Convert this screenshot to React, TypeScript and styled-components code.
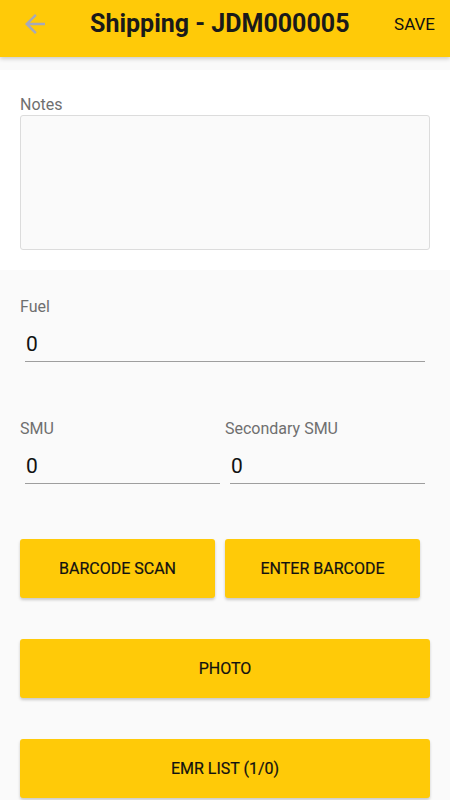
import styled, { createGlobalStyle } from "styled-components";

const GlobalStyle = createGlobalStyle`
    html, body {
        margin: 0;
        padding: 0;
        background: #fafafa;
        font-family: Roboto, "Liberation Sans", sans-serif;
    }
`;

const Page = styled.div`
    width: 450px;
    height: 800px;
    overflow: hidden;
    background: #fafafa;
`;

const Header = styled.header`
    box-sizing: border-box;
    height: 57px;
    padding-bottom: 10px;
    display: flex;
    align-items: center;
    background: #ffca08;
    box-shadow: 0 2px 4px rgba(0, 0, 0, 0.18);
    position: relative;
    z-index: 1;
`;

const BackButton = styled.button`
    width: 70px;
    height: 40px;
    padding: 0 0 0 20px;
    border: none;
    background: none;
    display: flex;
    align-items: center;
`;

const Title = styled.h1`
    flex: 1;
    margin: 0 0 0 20px;
    font-size: 25px;
    font-weight: bold;
    color: #1a1a1a;
`;

const SaveButton = styled.button`
    margin: 0 15px 0 0;
    padding: 0;
    border: none;
    background: none;
    font-family: Roboto, "Liberation Sans", sans-serif;
    font-size: 17px;
    color: #111;
`;

const NotesSection = styled.section`
    margin-top: 13px;
    padding: 26px 20px 20px;
    background: #fff;
`;

const Label = styled.div`
    font-size: 16px;
    color: #6f6f6f;
    line-height: 18px;
`;

const NotesBox = styled.textarea`
    display: block;
    box-sizing: border-box;
    width: 100%;
    height: 135px;
    margin-top: 1px;
    border: 1px solid #dcdcdc;
    border-radius: 3px;
    background: #fafafa;
    resize: none;
`;

const Form = styled.div`
    padding: 28px 20px 0;
`;

const Row = styled.div<{ $gap: number }>`
    display: flex;
    margin-bottom: ${(p) => p.$gap}px;
`;

const Field = styled.div`
    flex: 1;
`;

const ValueInput = styled.input`
    display: block;
    box-sizing: border-box;
    width: calc(100% - 10px);
    margin: 14px 5px 0;
    padding: 0 0 3px 1px;
    border: none;
    border-bottom: 1px solid #9e9e9e;
    background: transparent;
    font-family: Roboto, "Liberation Sans", sans-serif;
    font-size: 21px;
    line-height: 28px;
    color: #111;
    outline: none;
`;

const ButtonRow = styled.div`
    display: flex;
`;

const ActionButton = styled.button<{ $half?: boolean }>`
    display: block;
    width: ${(p) => (p.$half ? "calc(100% - 10px)" : "100%")};
    height: 59px;
    margin-bottom: 41px;
    border: none;
    border-radius: 3px;
    background: #ffca08;
    box-shadow: 0 2px 3px rgba(0, 0, 0, 0.2);
    font-family: Roboto, "Liberation Sans", sans-serif;
    font-size: 16px;
    font-weight: 400;
    color: #111;
    -webkit-text-stroke: 0.2px #111;
`;

const BackArrow = () => (
    <svg width="30" height="30" viewBox="0 0 24 24">
        <path d="M20 11H7.83l5.59-5.59L12 4l-8 8 8 8 1.41-1.41L7.83 13H20v-2z" fill="#a6a9ba" />
    </svg>
);

const App = () => {
    return (
    <Page>
        <GlobalStyle />
        <Header>
            <BackButton><BackArrow /></BackButton>
            <Title>Shipping - JDM000005</Title>
            <SaveButton>SAVE</SaveButton>
        </Header>

        <NotesSection>
            <Label>Notes</Label>
            <NotesBox />
        </NotesSection>

        <Form>
            <Row $gap={58}>
                <Field>
                    <Label>Fuel</Label>
                    <ValueInput defaultValue="0" />
                </Field>
            </Row>
            <Row $gap={55}>
                <Field>
                    <Label>SMU</Label>
                    <ValueInput defaultValue="0" />
                </Field>
                <Field>
                    <Label>Secondary SMU</Label>
                    <ValueInput defaultValue="0" />
                </Field>
            </Row>
            <ButtonRow>
                <Field><ActionButton $half>BARCODE SCAN</ActionButton></Field>
                <Field><ActionButton $half>ENTER BARCODE</ActionButton></Field>
            </ButtonRow>
            <ActionButton>PHOTO</ActionButton>
            <ActionButton>EMR LIST (1/0)</ActionButton>
        </Form>
    </Page>
    );
};

export default App;
